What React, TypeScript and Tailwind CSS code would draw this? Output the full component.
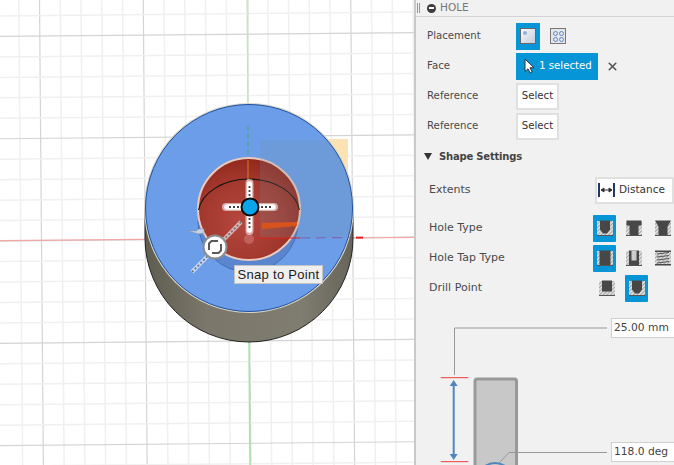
import { X } from 'lucide-react';

const FONT = "font-['DejaVu_Sans',sans-serif]";

type HoleKind =
  | 'simple'
  | 'counterbore'
  | 'countersink'
  | 'tapSimple'
  | 'tapClearance'
  | 'tapped'
  | 'flat'
  | 'angled';

const HOLE_PATHS: Record<HoleKind, string> = {
  simple: 'M3 0.5H13V9.5L10 13.5H6L3 9.5Z',
  counterbore: 'M0.5 0.5H15.5V5.5H12.5V15H3.5V5.5H0.5Z',
  countersink: 'M0 0.5H16L12.5 6.5V15H3.5V6.5Z',
  tapSimple: 'M2.5 0.5H13.5V15H2.5Z',
  tapClearance: 'M3 0.5H13V15H3Z',
  tapped: 'M0 0.5H16V2H0ZM0 14H16V15.5H0Z',
  flat: 'M3 0.5H13V11.5H3Z',
  angled: 'M3 0.5H13V9.5L10 13.5H6L3 9.5Z',
};

function HoleIcon({ kind }: { kind: HoleKind }) {
  const patternId = `hatch-${kind}`;
  return (
    <svg width="16" height="16" viewBox="0 0 16 16" className="block">
      <defs>
        <pattern id={patternId} width="2.6" height="2.6" patternUnits="userSpaceOnUse" patternTransform="rotate(45)">
          <rect width="2.6" height="2.6" fill="#e2e2e2" />
          <rect width="1" height="2.6" fill="#a3a3a3" />
        </pattern>
      </defs>
      <rect x="0" y="1" width="16" height="14" fill={`url(#${patternId})`} />
      {kind !== 'tapped' && <rect x="0" y="15" width="16" height="1" fill="#555" />}
      <path d={HOLE_PATHS[kind]} fill="#474747" />
      {kind === 'tapClearance' && <rect x="5.5" y="0.5" width="5" height="10" fill="#cdcdcd" />}
      {kind === 'tapped' && (
        <path d="M2 4L14 2.5M2 7L14 5.5M2 10L14 8.5M2 13L14 11.5" stroke="#555" strokeWidth="1" fill="none" />
      )}
    </svg>
  );
}

function IconTile({ kind, active }: { kind: HoleKind; active?: boolean }) {
  return (
    <div
      className={`flex h-[27px] w-[23px] items-center justify-center rounded-[1px] ${active ? 'bg-[#0696d7]' : ''}`}
    >
      <HoleIcon kind={kind} />
    </div>
  );
}

function SelectButton() {
  return (
    <div className="flex h-[27px] w-[43px] items-center justify-center border-2 border-[#e0e0e0] bg-white text-[#333]">
      Select
    </div>
  );
}

function Row({ label, children, wide }: { label: string; children: React.ReactNode; wide?: boolean }) {
  return (
    <div className={`flex h-[30px] items-center ${wide ? 'text-[11px]' : 'text-[10.2px]'}`}>
      <div className={wide ? 'w-[179px] pl-[13px]' : 'w-[100px] pl-[11px]'}>{label}</div>
      {children}
    </div>
  );
}

function Viewport() {
  const xs = Array.from({ length: 20 }, (_, i) => 18.75 + i * 20.75);
  const ys = Array.from({ length: 23 }, (_, i) => 16 + i * 20.46);
  return (
    <svg width="414" height="465" viewBox="0 0 414 465" className="absolute inset-0">
      <defs>
        <linearGradient id="wall" x1="0" y1="0" x2="1" y2="0">
          <stop offset="0" stopColor="#5f5c50" />
          <stop offset="0.3" stopColor="#7b786b" />
          <stop offset="0.75" stopColor="#7f7c70" />
          <stop offset="1" stopColor="#67645a" />
        </linearGradient>
        <radialGradient id="pit" cx="0.42" cy="0.62" r="0.62">
          <stop offset="0" stopColor="#b5473f" />
          <stop offset="0.7" stopColor="#a1372c" />
          <stop offset="1" stopColor="#92281c" />
        </radialGradient>
        <clipPath id="topFace">
          <circle cx="249" cy="208" r="103.5" />
        </clipPath>
      </defs>

      {xs.map((x, i) => (
        <line
          key={`v${i}`}
          x1={x}
          y1="0"
          x2={x + 3.9}
          y2="465"
          stroke={i % 5 === 1 ? '#d4d4d4' : '#f0f0f0'}
          strokeWidth={i % 5 === 1 ? 1.2 : 1.5}
        />
      ))}
      {ys.map((y, i) => (
        <line
          key={`h${i}`}
          x1="0"
          y1={y}
          x2="414"
          y2={y - 3.9}
          stroke={i % 5 === 1 ? '#d4d4d4' : '#f0f0f0'}
          strokeWidth={i % 5 === 1 ? 1.2 : 1.5}
        />
      ))}
      <line x1="0" y1="240.6" x2="145" y2="239.3" stroke="#f3a6a6" strokeWidth="1.2" />
      <line x1="353" y1="238" x2="414" y2="237.4" stroke="#f3a6a6" strokeWidth="1.2" />
      <line x1="356" y1="237.6" x2="363" y2="237.6" stroke="#e8201c" strokeWidth="2" />
      <line x1="248" y1="0" x2="248" y2="106" stroke="#bfe8bf" strokeWidth="1.2" />
      <line x1="249" y1="342" x2="250" y2="465" stroke="#a8e6a8" strokeWidth="1.6" />

      <rect x="260" y="139" width="88" height="80" fill="#fde2b4" />

      {/* body */}
      <path d="M145 208V238A104 104 0 0 0 353 238V208Z" fill="url(#wall)" stroke="#222" strokeWidth="1" />
      <circle cx="249" cy="208" r="105" fill="#d8d5ca" />
      <circle cx="249" cy="208" r="103.5" fill="#6b9de8" stroke="#1e4f9c" strokeWidth="1" />

      {/* lower wall of the hole, seen through the face */}
      <circle cx="248" cy="222" r="50" fill="#5b86cf" stroke="#3c65ae" strokeWidth="0.8" />
      <circle cx="249" cy="209" r="51" fill="url(#pit)" stroke="#ecc9bd" strokeWidth="2" />
      <path d="M198.5 210A51 36 0 0 1 299.5 210" fill="none" stroke="#111" strokeWidth="1.1" />

      {/* sketch plane overlay */}
      <g clipPath="url(#topFace)">
        <rect x="260" y="140" width="92" height="98" fill="#7a8f99" fillOpacity="0.2" />
      </g>
      <path d="M262 223L297 222V226L262 229Z" fill="#d9541c" />
      <line x1="258" y1="238" x2="300" y2="238" stroke="#d9231c" strokeWidth="1.2" />
      <line x1="300" y1="238" x2="350" y2="237.5" stroke="#8266b0" strokeWidth="1.2" strokeDasharray="10 6" />
      <line x1="248" y1="126" x2="248" y2="158" stroke="#4fa59a" strokeWidth="1.4" strokeDasharray="5 3" />
      <line x1="248" y1="160" x2="248" y2="190" stroke="#d47a22" strokeWidth="1" />
      <circle cx="249" cy="239" r="5" fill="#c2605c" />

      {/* move manipulator */}
      <line x1="241" y1="222" x2="192" y2="272" stroke="#fff" strokeOpacity="0.6" strokeWidth="4" />
      <line x1="241" y1="222" x2="192" y2="272" stroke="#6b7684" strokeWidth="1.8" strokeDasharray="2 2" />
      <path d="M249.5 183V231M226 207H274" stroke="#fff" strokeOpacity="0.55" strokeWidth="8" strokeLinecap="round" />
      <path d="M249.5 184V230M227 207H273" stroke="#fff" strokeWidth="5.5" strokeLinecap="round" />
      <path d="M249.5 186V228M229 207H271" stroke="#444" strokeWidth="1.8" strokeDasharray="2 2" />
      <circle cx="250" cy="207" r="8.5" fill="#08a5e8" stroke="#0a0a0a" strokeWidth="2" />

      <path d="M188 231H196L199 229H204V233L199 234Z" fill="#c9d2e2" stroke="#8190a8" strokeWidth="0.5" />
      <circle cx="215" cy="247" r="11.5" fill="#fff" stroke="#8b8b8b" strokeWidth="2" />
      <path
        d="M209 250V243.5L211.5 241H218M221 244V250.5L218.5 253H212"
        fill="none"
        stroke="#5a5a5a"
        strokeWidth="2"
      />
    </svg>
  );
}

function HoleDiagram() {
  return (
    <div className="relative mt-[7px] h-[155px]">
      <svg width="260" height="155" viewBox="0 0 260 155" className="absolute left-0 top-0">
        <path d="M38.5 65V18H191" fill="none" stroke="#999" strokeWidth="1" />
        <path d="M24.7 67.7H52.3M24.7 151.7H52.3" stroke="#ee3b3b" strokeWidth="1" />
        <path d="M37.7 74V146" stroke="#4f86bd" strokeWidth="2" />
        <path d="M37.7 70L33.7 76H41.7ZM37.7 150L33.7 144H41.7Z" fill="#4f86bd" />
        <path d="M59 155V71Q59 69 61 69H98.5Q100.5 69 100.5 71V155" fill="#c8c8c8" stroke="#999" strokeWidth="3" />
        <path d="M69 156Q79 150 89 156" fill="none" stroke="#4f86bd" strokeWidth="2" />
        <path d="M83 153L93 142.5H191" fill="none" stroke="#999" strokeWidth="1" />
      </svg>
      <div className="absolute left-[195px] top-[8px] flex h-[20px] w-[70px] items-center border border-[#cfcfcf] bg-white pl-[2px] text-[10.7px] text-[#444]">
        25.00 mm
      </div>
      <div className="absolute left-[195px] top-[132px] flex h-[20px] w-[70px] items-center border border-[#cfcfcf] bg-white pl-[2px] text-[10.7px] text-[#444]">
        118.0 deg
      </div>
    </div>
  );
}

export default function App() {
  return (
    <div className={`relative flex h-[465px] w-[674px] overflow-hidden bg-white ${FONT}`}>
      <div className="relative h-full w-[414px] shrink-0">
        <Viewport />
        <div className="absolute left-[234px] top-[265px] flex h-[19px] w-[89px] items-center justify-center border border-[#c4c4c4] bg-[#efefef] font-['Liberation_Sans',sans-serif] text-[13px] tracking-[0.3px] text-[#1c1c1c]">
          Snap to Point
        </div>
      </div>

      <div className="h-full w-[260px] shrink-0 overflow-hidden border-l-2 border-[#c9c9c9] bg-[#f1f1f1] text-[#4a4a4a]">
        <div className="flex h-[17px] items-center border-b border-[#d4d4d4] text-[10.5px]">
          <div className="ml-[1px] h-[10px] w-[3px] border-x border-[#999]" />
          <div className="ml-[7px] flex h-[9px] w-[9px] items-center justify-center rounded-full bg-[#3c3c3c]">
            <div className="h-[2px] w-[5px] bg-white" />
          </div>
          <span className="ml-[4px] text-[#777]">HOLE</span>
        </div>
        <div className="h-[4px]" />

        <Row label="Placement">
          <div className="flex h-[27px] w-[24px] items-center justify-center bg-[#0696d7]">
            <div className="relative h-[16px] w-[16px] border border-[#666] bg-gradient-to-br from-[#fafafa] to-[#c4cbdc]">
              <div className="absolute left-[2px] top-[2px] h-[4px] w-[4px] rounded-full bg-[#8fb0e0]" />
            </div>
          </div>
          <div className="ml-[10px] grid h-[16px] w-[16px] grid-cols-2 place-items-center border border-[#777] bg-[#e4e6ea] p-[1px]">
            <div className="h-[5px] w-[5px] rounded-full border border-[#5f88c4]" />
            <div className="h-[5px] w-[5px] rounded-full border border-[#5f88c4]" />
            <div className="h-[5px] w-[5px] rounded-full border border-[#5f88c4]" />
            <div className="h-[5px] w-[5px] rounded-full border border-[#5f88c4]" />
          </div>
        </Row>
        <Row label="Face">
          <div className="flex h-[27px] w-[82px] items-center bg-[#0696d7] pl-[8px] text-white">
            <svg width="11" height="16" viewBox="0 0 11 16">
              <path d="M1 1V13.5L4 10.8L6.2 15L8.2 14L6 9.8H10Z" fill="#fff" stroke="#333" strokeWidth="1" />
            </svg>
            <span className="ml-[4px]">1 selected</span>
          </div>
          <X size={13} strokeWidth={3} className="ml-[8px] text-[#555]" />
        </Row>
        <Row label="Reference">
          <SelectButton />
        </Row>
        <Row label="Reference">
          <SelectButton />
        </Row>

        <div className="flex h-[30px] items-center pl-[8px] text-[10px] font-bold tracking-[-0.2px]">
          <div className="h-0 w-0 border-x-[4.5px] border-t-[7px] border-x-transparent border-t-[#333]" />
          <span className="ml-[7px] text-[#444]">Shape Settings</span>
        </div>

        <div className="h-[4px]" />
        <Row label="Extents" wide>
          <div className="flex h-[27px] flex-1 items-center border-2 border-[#e0e0e0] bg-white pl-[1px] text-[10.5px] text-[#333]">
            <svg width="17" height="16" viewBox="0 0 17 16">
              <path d="M1 1V15M16 1V15" stroke="#1f3864" strokeWidth="2" />
              <path d="M3 8H14M3 8L6 6V10ZM14 8L11 6V10Z" stroke="#333" strokeWidth="1" fill="#333" />
            </svg>
            <span className="ml-[4px]">Distance</span>
          </div>
        </Row>
        <div className="h-[8px]" />
        <Row label="Hole Type" wide>
          <div className="flex gap-[6px]">
            <IconTile kind="simple" active />
            <IconTile kind="counterbore" />
            <IconTile kind="countersink" />
          </div>
        </Row>
        <Row label="Hole Tap Type" wide>
          <div className="flex gap-[6px]">
            <IconTile kind="tapSimple" active />
            <IconTile kind="tapClearance" />
            <IconTile kind="tapped" />
          </div>
        </Row>
        <Row label="Drill Point" wide>
          <div className="flex gap-[7px]">
            <IconTile kind="flat" />
            <IconTile kind="angled" active />
          </div>
        </Row>
        <HoleDiagram />
      </div>
    </div>
  );
}
